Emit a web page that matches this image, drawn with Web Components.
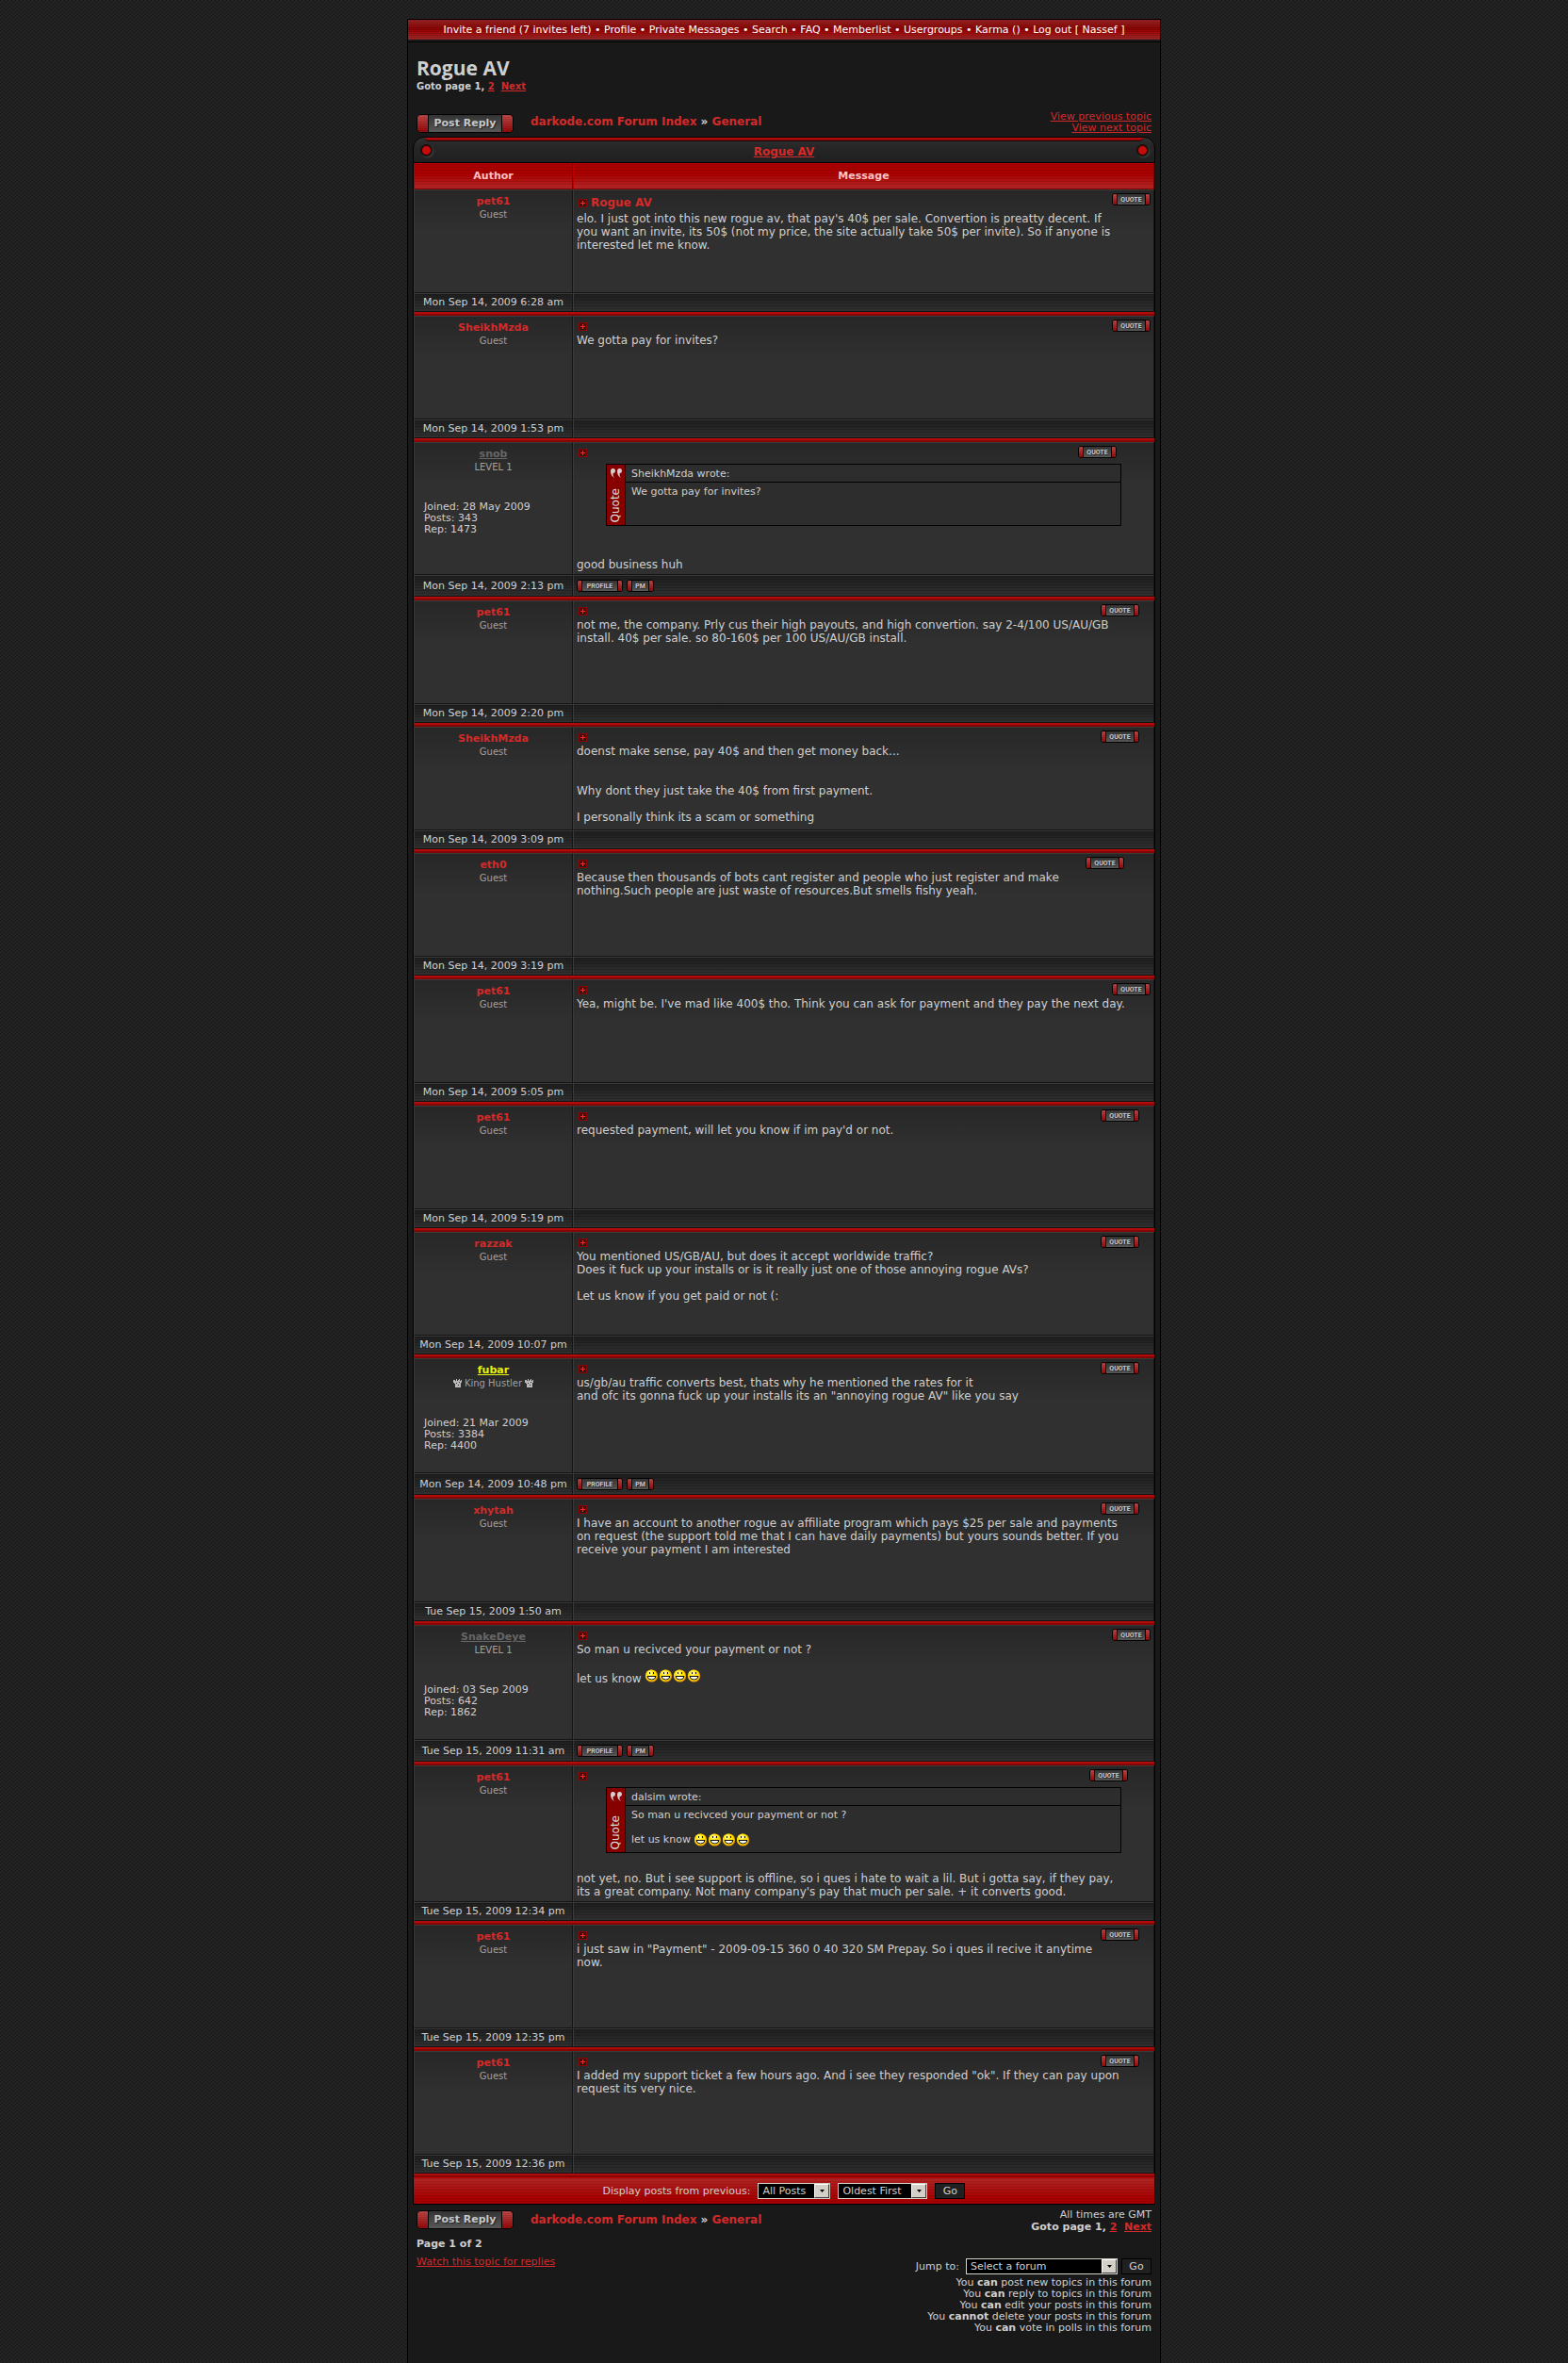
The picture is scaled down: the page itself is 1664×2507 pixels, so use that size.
<!DOCTYPE html>
<html lang="en">
<head>
<meta charset="utf-8">
<meta name="viewport" content="width=device-width, initial-scale=1">
<title>Rogue AV</title>
<style>
  :root {
    --text: #cfcfcf;
    --muted: #a0a0a0;
    --link: #d52a2a;
    --panel: #191919;
  }

  body {
    margin: 0;
    padding-top: 20px;
    min-height: 100vh;
    box-sizing: border-box;
    display: flex;
    flex-direction: column;
    background: #242424 linear-gradient(135deg, #1c1c1c 25%, transparent 25% 50%, #1c1c1c 50% 75%, transparent 75%) 0 0 / 4px 4px;
    color: var(--text);
    font-family: "DejaVu Sans", Verdana, sans-serif;
    font-size: 11px;
    line-height: 12px;
  }
</style>
</head>
<body>
<forum-page>
  <forum-nav slot="nav"></forum-nav>
  <topic-header></topic-header>
  <topic-table></topic-table>
  <topic-footer></topic-footer>
</forum-page>

<script>
const linkStyle = `
  a { color: var(--link); }
  a.plain { text-decoration: none; }
`;

class ForumPage extends HTMLElement {
  constructor() {
    super();
    this.attachShadow({ mode: 'open' }).innerHTML = `
      <style>
        :host {
          display: flex;
          flex: 1;
          flex-direction: column;
          box-sizing: border-box;
          width: 100%;
          max-width: 800px;
          margin: 0 auto;
          border: 1px solid #000;
          border-bottom: 0;
          background: var(--panel);
        }
        main { padding: 0 5px 24px; }
      </style>
      <slot name="nav"></slot>
      <main><slot></slot></main>
    `;
  }
}

class ForumNav extends HTMLElement {
  constructor() {
    super();
    const items = ['Invite a friend (7 invites left)', 'Profile', 'Private Messages', 'Search', 'FAQ',
      'Memberlist', 'Usergroups', 'Karma ()', 'Log out [ Nassef ]'];
    this.attachShadow({ mode: 'open' }).innerHTML = `
      <style>
        :host { display: block; border-bottom: 1px solid #000; padding-bottom: 2px; }
        nav {
          background:
            repeating-linear-gradient(rgba(0, 0, 0, .14) 0 1px, transparent 1px 2px),
            linear-gradient(#9c2424, #8c0404 45%, #a30808 60%, #9c2a2a);
          color: #fff;
          font-size: 11px;
          line-height: 21px;
          text-align: center;
        }
        a { color: inherit; text-decoration: none; }
      </style>
      <nav>${items.map(item => `<a href="#">${item}</a>`).join(' • ')}</nav>
    `;
  }
}

/* Pill with red end caps: "large" for Post Reply, otherwise the tiny one */
class PixelButton extends HTMLElement {
  constructor() {
    super();
    this.attachShadow({ mode: 'open' }).innerHTML = `
      <style>
        :host { display: inline-flex; width: 41px; height: 13px; }
        :host([large]) { width: 103px; height: 20px; }
        :host([size="profile"]) { width: 49px; }
        :host([size="pm"]) { width: 29px; }
        button {
          --cap: 4px;
          flex: 1;
          display: flex;
          padding: 0;
          border: 1px solid #000;
          border-radius: 3px;
          overflow: hidden;
          background: linear-gradient(#333, #585858);
          color: #c8c8c8;
          font: bold 7px/12px Roboto, sans-serif;
          text-shadow: 1px 1px 1px #222;
        }
        :host([large]) button {
          --cap: 11px;
          border-radius: 5px;
          font: bold 11px/18px "DejaVu Sans", Verdana, sans-serif;
        }
        button::before, button::after {
          content: "";
          flex: none;
          width: var(--cap);
          align-self: stretch;
          background:
            repeating-linear-gradient(rgba(0, 0, 0, .12) 0 1px, transparent 1px 2px),
            linear-gradient(#c04848, #980808);
          border-right: 1px solid #000;
        }
        button::after { border-right: 0; border-left: 1px solid #000; }
        span { flex: 1; min-width: 0; text-align: center; white-space: nowrap; }
      </style>
      <button type="button"><span><slot></slot></span></button>
    `;
  }
}

class PostIcon extends HTMLElement {
  constructor() {
    super();
    this.attachShadow({ mode: 'open' }).innerHTML = `
      <style>:host { display: block; width: 9px; height: 9px; } svg { display: block; }</style>
      <svg width="9" height="9" shape-rendering="crispEdges" aria-hidden="true">
        <rect width="9" height="9" fill="#8a0505"/>
        <rect x="1" y="1" width="7" height="7" fill="#3a1212"/>
        <path d="M2 6h5v2H2z" fill="#1c1c1c"/>
        <path d="M4 2h1v2h2v1H5v2H4V5H2V4h2z" fill="#e03030"/>
      </svg>
    `;
  }
}

class SmileFace extends HTMLElement {
  constructor() {
    super();
    this.attachShadow({ mode: 'open' }).innerHTML = `
      <style>
        :host { display: inline-block; width: 15px; height: 14px; vertical-align: var(--smile-align, baseline); }
        svg { display: block; }
      </style>
      <svg width="15" height="14" role="img" aria-label="Very Happy">
        <circle cx="7.5" cy="7" r="6.6" fill="#f0a000"/>
        <circle cx="7" cy="6.5" r="5.9" fill="#ffe100"/>
        <circle cx="6" cy="4" r="2.6" fill="#fff27a"/>
        <path d="M5 3h1v2H5zM9 3h1v2H9z" fill="#111"/>
        <path d="M3 7.500h9q-.5 3.500-4.500 3.500T3 7.500z" fill="#fff" stroke="#111"/>
      </svg>
    `;
  }
}

class CrownIcon extends HTMLElement {
  constructor() {
    super();
    this.attachShadow({ mode: 'open' }).innerHTML = `
      <style>:host { display: inline-block; width: 9px; height: 9px; vertical-align: -1px; } svg { display: block; }</style>
      <svg width="9" height="9" fill="#b8b8b8" shape-rendering="crispEdges" aria-hidden="true">
        <path d="M0 1h2v1h1V0h1v2h1V1h1V0h1v2h1V1h1v3H8v5H2V5H1V4H0z"/>
        <path d="M3 4h1v1H3zM6 3h1v1H6zM5 6h1v1H5z" fill="#2e2e2e"/>
      </svg>
    `;
  }
}

class QuoteBox extends HTMLElement {
  constructor() {
    super();
    this.attachShadow({ mode: 'open' }).innerHTML = `
      <style>
        :host { display: block; margin: 4px 31px 20px 31px; }
        blockquote {
          --smile-align: middle;
          display: grid;
          grid-template-columns: 20px 1fr;
          margin: 0;
          border: 1px solid #000;
          background: #2d2d2d;
          font-size: 11px;
          line-height: 13px;
        }
        .side {
          grid-row: span 2;
          display: flex;
          flex-direction: column;
          align-items: center;
          justify-content: space-between;
          padding: 4px 0 3px;
          background: #860000;
          border-right: 1px solid #000;
          color: #ddd;
        }
        .side span { writing-mode: vertical-rl; transform: rotate(180deg); font-size: 12px; }
        header { padding: 3px 6px 2px; border-bottom: 1px solid #000; }
        .text { min-height: 36px; padding: 3px 6px 6px; }
      </style>
      <blockquote>
        <div class="side">
          <svg width="12" height="11" fill="#d8d0d0" aria-hidden="true">
            <path d="M0 3q0-3 2.500-3Q5 0 5 2.500T2.600 5Q2 8 4 10 0 8 0 3zM7 3q0-3 2.500-3Q12 0 12 2.500T9.600 5Q9 8 11 10 7 8 7 3z"/>
          </svg>
          <span>Quote</span>
        </div>
        <header>${this.getAttribute('author')} wrote:</header>
        <div class="text"><slot></slot></div>
      </blockquote>
    `;
  }
}

class BreadCrumb extends HTMLElement {
  constructor() {
    super();
    this.attachShadow({ mode: 'open' }).innerHTML = `
      <style>
        :host { display: flex; gap: 18px; }
        nav { font-size: 12px; line-height: 16px; font-weight: bold; }
        ${linkStyle}
      </style>
      <pixel-button large>Post Reply</pixel-button>
      <nav><a class="plain" href="#">darkode.com Forum Index</a> » <a class="plain" href="#">General</a></nav>
    `;
  }
}

class TopicHeader extends HTMLElement {
  constructor() {
    super();
    this.attachShadow({ mode: 'open' }).innerHTML = `
      <style>
        :host { display: block; padding: 13px 4px 0; }
        h1 { margin: 0; font: bold 21px/28px "Open Sans", "Trebuchet MS", sans-serif; }
        .pages { font-size: 10px; font-weight: bold; }
        .bar { display: flex; justify-content: space-between; margin-top: 20px; height: 27px; }
        bread-crumb { padding-top: 3px; align-items: flex-start; }
        .nearby { text-align: right; }
        ${linkStyle}
      </style>
      <h1>Rogue AV</h1>
      <div class="pages">Goto page 1, <a href="#">2</a>&nbsp; <a href="#">Next</a></div>
      <div class="bar">
        <bread-crumb></bread-crumb>
        <div class="nearby"><a href="#">View previous topic</a><br><a href="#">View next topic</a></div>
      </div>
    `;
  }
}

const smiles = '<smile-face></smile-face>'.repeat(4);

/* inset: space to the right of the post's quote button */
const posts = [
  { author: 'pet61', date: 'Mon Sep 14, 2009 6:28 am', title: 'Rogue AV', inset: 0,
    text: `elo. I just got into this new rogue av, that pay's 40$ per sale. Convertion is preatty decent. If<br>you want an invite, its 50$ (not my price, the site actually take 50$ per invite). So if anyone is<br>interested let me know.` },
  { author: 'SheikhMzda', date: 'Mon Sep 14, 2009 1:53 pm', inset: 0, text: 'We gotta pay for invites?' },
  { author: 'snob', kind: 'member', rank: 'LEVEL 1', joined: '28 May 2009', posts: 343, rep: 1473,
    date: 'Mon Sep 14, 2009 2:13 pm', inset: 36,
    text: '<quote-box author="SheikhMzda">We gotta pay for invites?</quote-box><br>good business huh' },
  { author: 'pet61', date: 'Mon Sep 14, 2009 2:20 pm', inset: 12,
    text: 'not me, the company. Prly cus their high payouts, and high convertion. say 2-4/100 US/AU/GB<br>install. 40$ per sale. so 80-160$ per 100 US/AU/GB install.' },
  { author: 'SheikhMzda', date: 'Mon Sep 14, 2009 3:09 pm', inset: 12,
    text: 'doenst make sense, pay 40$ and then get money back...<br><br><br>Why dont they just take the 40$ from first payment.<br><br>I personally think its a scam or something' },
  { author: 'eth0', date: 'Mon Sep 14, 2009 3:19 pm', inset: 28,
    text: 'Because then thousands of bots cant register and people who just register and make<br>nothing.Such people are just waste of resources.But smells fishy yeah.' },
  { author: 'pet61', date: 'Mon Sep 14, 2009 5:05 pm', inset: 0,
    text: `Yea, might be. I've mad like 400$ tho. Think you can ask for payment and they pay the next day.` },
  { author: 'pet61', date: 'Mon Sep 14, 2009 5:19 pm', inset: 12,
    text: `requested payment, will let you know if im pay'd or not.` },
  { author: 'razzak', date: 'Mon Sep 14, 2009 10:07 pm', inset: 12,
    text: 'You mentioned US/GB/AU, but does it accept worldwide traffic?<br>Does it fuck up your installs or is it really just one of those annoying rogue AVs?<br><br>Let us know if you get paid or not (:' },
  { author: 'fubar', kind: 'king', rank: '<crown-icon></crown-icon> King Hustler <crown-icon></crown-icon>',
    joined: '21 Mar 2009', posts: 3384, rep: 4400, date: 'Mon Sep 14, 2009 10:48 pm', inset: 12,
    text: 'us/gb/au traffic converts best, thats why he mentioned the rates for it<br>and ofc its gonna fuck up your installs its an "annoying rogue AV" like you say' },
  { author: 'xhytah', date: 'Tue Sep 15, 2009 1:50 am', inset: 12,
    text: 'I have an account to another rogue av affiliate program which pays $25 per sale and payments<br>on request (the support told me that I can have daily payments) but yours sounds better. If you<br>receive your payment I am interested' },
  { author: 'SnakeDeye', kind: 'member', rank: 'LEVEL 1', joined: '03 Sep 2009', posts: 642, rep: 1862,
    date: 'Tue Sep 15, 2009 11:31 am', inset: 0,
    text: `So man u recivced your payment or not ?<br><br>let us know ${smiles}` },
  { author: 'pet61', date: 'Tue Sep 15, 2009 12:34 pm', inset: 24,
    text: `<quote-box author="dalsim">So man u recivced your payment or not ?<br><br>let us know ${smiles}</quote-box>not yet, no. But i see support is offline, so i ques i hate to wait a lil. But i gotta say, if they pay,<br>its a great company. Not many company's pay that much per sale. + it converts good.` },
  { author: 'pet61', date: 'Tue Sep 15, 2009 12:35 pm', inset: 12,
    text: 'i just saw in "Payment" - 2009-09-15 360 0 40 320 SM Prepay. So i ques il recive it anytime<br>now.' },
  { author: 'pet61', date: 'Tue Sep 15, 2009 12:36 pm', inset: 12,
    text: 'I added my support ticket a few hours ago. And i see they responded "ok". If they can pay upon<br>request its very nice.' }
];

class TopicTable extends HTMLElement {
  constructor() {
    super();
    this.attachShadow({ mode: 'open' });
  }

  connectedCallback() {
    this.shadowRoot.innerHTML = `
      <style>
        :host { display: block; }
        .cap {
          display: grid;
          grid-template-columns: 26px 1fr 26px;
          box-sizing: border-box;
          height: 28px;
          border: 1px solid #000;
          border-radius: 12px 12px 0 0;
          background: linear-gradient(#303030, #262626 40%, #202020);
        }
        .cap i {
          align-self: center;
          justify-self: center;
          width: 9px;
          height: 9px;
          border: 1px solid #200;
          border-radius: 50%;
          background: #c40c0c;
          box-shadow: 0 0 1px 1px #111, 1px 1px 2px 1px #484848;
        }
        .cap div { margin: 0 -14px; text-align: center; font-size: 12px; line-height: 22px; font-weight: bold; }
        .cap div::before {
          content: "";
          display: block;
          height: 3px;
          background: linear-gradient(#b80c0c, #8f0808);
          border-bottom: 1px solid #0a0a0a;
          border-radius: 0 0 5px 5px;
        }
        table {
          width: 100%;
          border-collapse: separate;
          border-spacing: 0;
          table-layout: fixed;
          border: solid #000;
          border-width: 0 1px;
        }
        .author { width: 169px; }
        th, td { box-sizing: border-box; padding: 0; vertical-align: top; }
        th {
          height: 28px;
          vertical-align: middle;
          background:
            repeating-linear-gradient(rgba(0, 0, 0, .1) 0 1px, transparent 1px 3px),
            linear-gradient(#aa0000 40%, #b62626);
          border: 1px solid #b80000;
          border-right-color: #780000;
          border-bottom-color: #780000;
          color: #ffc0c0;
          font-size: 11px;
          line-height: 14px;
        }
        td { border: 1px solid #3a3a3a; border-right-color: #141414; border-bottom-color: #141414; }
        .post td { height: 110px; padding: 3px; background: linear-gradient(#272727, #303030 44px); }
        .post.tall td { height: 122px; }
        .post .who { padding-top: 4px; text-align: center; }
        .name { font-size: 11px; line-height: 16px; font-weight: bold; color: var(--link); text-decoration: none; }
        .name.member { color: #666; text-decoration: underline; }
        .name.king { color: #e9f20c; text-decoration: underline; }
        .rank { color: var(--muted); font-size: 10px; }
        .stats { margin: 30px 7px 0; text-align: left; }
        .top { display: flex; height: 15px; }
        .titled { height: 20px; }
        .top post-icon { align-self: center; margin: 0 4px 0 2px; }
        .top h2 { margin: 0; font-size: 12px; line-height: 21px; color: var(--link); }
        .top pixel-button { margin-left: auto; }
        .text { font-size: 12px; line-height: 14px; white-space: nowrap; }
        .foot td {
          height: 20px;
          background:
            repeating-linear-gradient(rgba(0, 0, 0, .16) 0 1px, transparent 1px 3px),
            linear-gradient(#1e1e1e, #303030);
          text-align: center;
          vertical-align: middle;
          white-space: nowrap;
        }
        .foot.tall td { height: 23px; }
        .foot .tools { padding: 0 3px; text-align: left; }
        .tools div { display: flex; gap: 4px; }
        .rule td { height: 4px; border: 0; background: linear-gradient(#b00c0c 50%, #860606 50%); }
        form {
          display: flex;
          align-items: center;
          justify-content: center;
          gap: 8px;
          box-sizing: border-box;
          height: 29px;
          border: 1px solid #000;
          border-top: 1px solid #c40000;
          background:
            repeating-linear-gradient(rgba(0, 0, 0, .1) 0 1px, transparent 1px 3px),
            linear-gradient(#b02424, #a80000 80%);
        }
        ${linkStyle}
      </style>
      <div class="cap"><i></i><div><a href="#">Rogue AV</a></div><i></i></div>
      <table>
        <thead><tr><th class="author" scope="col">Author</th><th scope="col">Message</th></tr></thead>
        <tbody>${posts.map(post => this.renderPost(post)).join('')}</tbody>
      </table>
      <form>
        <span>Display posts from previous:</span>
        <drop-down label="Post age" value="All Posts" style="width: 77px"></drop-down>
        <drop-down label="Post order" value="Oldest First" style="width: 95px"></drop-down>
        <go-button></go-button>
      </form>
    `;
  }

  renderPost(post) {
    const tall = post.kind ? 'tall' : '';
    const name = post.kind
      ? `<a class="name ${post.kind}" href="#">${post.author}</a>`
      : `<span class="name">${post.author}</span>`;
    const stats = post.kind
      ? `<div class="stats">Joined: ${post.joined}<br>Posts: ${post.posts}<br>Rep: ${post.rep}</div>`
      : '';
    const tools = post.kind
      ? '<div><pixel-button size="profile">PROFILE</pixel-button><pixel-button size="pm">PM</pixel-button></div>'
      : '';
    return `
      <tr class="post ${tall}">
        <td class="who">${name}<div class="rank">${post.rank || 'Guest'}</div>${stats}</td>
        <td>
          <div class="top ${post.title ? 'titled' : ''}" style="padding-right: ${post.inset}px">
            <post-icon></post-icon>${post.title ? `<h2>${post.title}</h2>` : ''}
            <pixel-button>QUOTE</pixel-button>
          </div>
          <div class="text">${post.text}</div>
        </td>
      </tr>
      <tr class="foot ${tall}"><td>${post.date}</td><td class="tools">${tools}</td></tr>
      <tr class="rule"><td colspan="2"></td></tr>
    `;
  }
}

class DropDown extends HTMLElement {
  connectedCallback() {
    this.attachShadow({ mode: 'open' }).innerHTML = `
      <style>
        :host { display: inline-block; position: relative; height: 17px; }
        select {
          appearance: none;
          box-sizing: border-box;
          width: 100%;
          height: 17px;
          padding: 0 18px 0 4px;
          border: 1px solid #d4d0c8;
          border-radius: 0;
          background: #000;
          color: var(--text);
          font: 11px/15px "DejaVu Sans", Verdana, sans-serif;
        }
        span {
          position: absolute;
          top: 1px;
          right: 1px;
          box-sizing: border-box;
          width: 16px;
          height: 15px;
          border: 1px solid #fff;
          border-right-color: #404040;
          border-bottom-color: #404040;
          background: #d4d0c8;
          pointer-events: none;
        }
        svg { display: block; margin: 5px auto 0; }
      </style>
      <select aria-label="${this.getAttribute('label')}"><option>${this.getAttribute('value')}</option></select>
      <span><svg width="5" height="3" aria-hidden="true"><path d="M0 0h5L2.500 3z"/></svg></span>
    `;
  }
}

class GoButton extends HTMLElement {
  constructor() {
    super();
    this.attachShadow({ mode: 'open' }).innerHTML = `
      <style>
        :host { display: inline-flex; }
        button {
          width: 32px;
          height: 17px;
          padding: 0;
          border: 1px solid #000;
          background: #202020;
          color: var(--text);
          font: 11px/15px "DejaVu Sans", Verdana, sans-serif;
        }
      </style>
      <button type="button">Go</button>
    `;
  }
}

class TopicFooter extends HTMLElement {
  constructor() {
    super();
    const rights = [['can', 'post new topics'], ['can', 'reply to topics'], ['can', 'edit your posts'],
      ['cannot', 'delete your posts'], ['can', 'vote in polls']];
    this.attachShadow({ mode: 'open' }).innerHTML = `
      <style>
        :host { display: flex; justify-content: space-between; padding: 0 4px; }
        .left { padding-top: 6px; }
        bread-crumb { align-items: center; }
        .count { margin: 9px 0 6px; font-size: 11px; line-height: 14px; font-weight: bold; }
        .right { padding-top: 5px; text-align: right; }
        .pages { font-size: 11px; line-height: 14px; font-weight: bold; }
        form { display: flex; justify-content: flex-end; align-items: center; gap: 4px; margin: 26px 0 3px; }
        drop-down { width: 161px; margin-left: 3px; }
        ${linkStyle}
      </style>
      <div class="left">
        <bread-crumb></bread-crumb>
        <div class="count">Page 1 of 2</div>
        <a href="#">Watch this topic for replies</a>
      </div>
      <div class="right">
        <div>All times are GMT</div>
        <div class="pages">Goto page 1, <a href="#">2</a>&nbsp; <a href="#">Next</a></div>
        <form>
          <span>Jump to:</span>
          <drop-down label="Jump to" value="Select a forum"></drop-down>
          <go-button></go-button>
        </form>
        ${rights.map(([verb, what]) => `<div>You <b>${verb}</b> ${what} in this forum</div>`).join('')}
      </div>
    `;
  }
}

customElements.define('pixel-button', PixelButton);
customElements.define('post-icon', PostIcon);
customElements.define('smile-face', SmileFace);
customElements.define('crown-icon', CrownIcon);
customElements.define('quote-box', QuoteBox);
customElements.define('bread-crumb', BreadCrumb);
customElements.define('drop-down', DropDown);
customElements.define('go-button', GoButton);
customElements.define('forum-nav', ForumNav);
customElements.define('topic-header', TopicHeader);
customElements.define('topic-table', TopicTable);
customElements.define('topic-footer', TopicFooter);
customElements.define('forum-page', ForumPage);
</script>
</body>
</html>
